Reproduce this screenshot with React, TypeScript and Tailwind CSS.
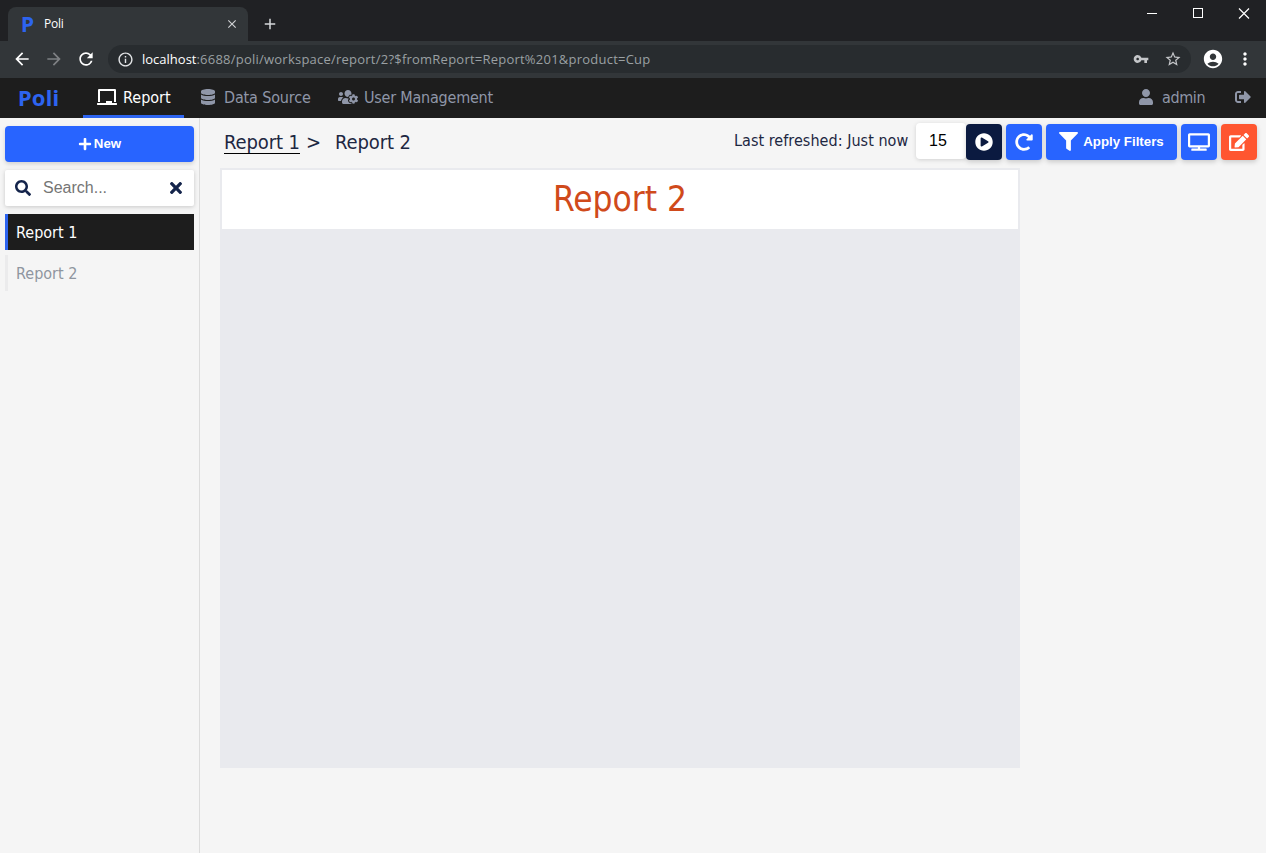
import React from 'react';
import {
  FaChalkboard, FaDatabase, FaUsersCog, FaUser, FaSignOutAlt, FaPlus, FaSearch,
  FaTimes, FaPlayCircle, FaRedoAlt, FaFilter, FaTv, FaEdit,
} from 'react-icons/fa';
import {
  MdArrowBack, MdArrowForward, MdRefresh, MdInfoOutline, MdVpnKey, MdStarBorder,
  MdAccountCircle, MdMoreVert, MdClose, MdAdd,
} from 'react-icons/md';

const BrowserTabs = () => (
  <div className="flex h-[41px] items-stretch bg-[#202124] pl-2">
    <div className="mt-[7px] flex w-60 shrink-0 items-center rounded-t-lg bg-[#323639] pl-[13px] pr-[9px] text-white">
      <span className="w-[23px] font-['Noto_Sans',sans-serif] text-[21px] leading-none font-bold text-[#2d64f0]">P</span>
      <span className="flex-1 font-['Open_Sans',sans-serif] text-[12px] leading-4 tracking-[-0.2px]">Poli</span>
      <MdClose className="size-[14px] text-[#cfd1d4]" />
    </div>
    <MdAdd className="mt-[15px] ml-[13px] size-[18px] text-[#d5d7da]" />
    <div className="mt-2 mr-4 ml-auto flex gap-[34px] text-white">
      <svg className="h-[11px] w-3" viewBox="0 0 12 11"><path d="M1 5.5h10" stroke="currentColor" /></svg>
      <svg className="h-[11px] w-3" viewBox="0 0 12 11"><rect x="1.5" y=".5" width="9" height="9" fill="none" stroke="currentColor" /></svg>
      <svg className="h-[11px] w-3" viewBox="0 0 12 11"><path d="m1 .5 10 10M11 .5l-10 10" stroke="currentColor" strokeWidth="1.2" /></svg>
    </div>
  </div>
);

const AddressBar = () => (
  <div className="flex h-[37px] items-center bg-[#323639] pb-px text-white">
    <MdArrowBack className="ml-3 size-5" />
    <MdArrowForward className="ml-3 size-5 text-[#7e8184]" />
    <MdRefresh className="ml-3 size-5" />
    <div className="ml-3 flex h-7 w-[1083px] items-center rounded-full bg-[#282c2f] pr-[9px] pl-[9px]">
      <MdInfoOutline className="size-[17px] text-[#e4e6e8]" />
      <span className="ml-2 flex-1 font-['Open_Sans',sans-serif] text-[13px] leading-5 tracking-[0.23px] whitespace-nowrap text-[#9aa0a3]">
        <span className="tracking-normal text-white">localhost</span>:6688/poli/workspace/report/2?$fromReport=Report%201&amp;product=Cup
      </span>
      <MdVpnKey className="size-4 text-[#c4c6c9]" />
      <MdStarBorder className="ml-[15px] size-[18px] text-[#c4c6c9]" />
    </div>
    <MdAccountCircle className="ml-[11px] size-[22px]" />
    <MdMoreVert className="ml-[11px] size-5" />
  </div>
);

const NavBar = () => (
  <nav className="flex h-10 bg-[#1d1d1d] font-['DejaVu_Sans_Condensed','DejaVu_Sans',sans-serif] text-[16px] text-[#8f96a8] [font-stretch:condensed]">
    <div className="w-[83px] pt-[3px] pl-[18px] font-['Noto_Sans',sans-serif] text-[22px] leading-8 font-bold tracking-[0.2px] text-[#2d64f0]">Poli</div>
    <div className="flex w-[101px] items-center border-b-[3px] border-[#2d64f0] pl-[14px] text-white">
      <FaChalkboard className="h-4 w-5" />
      <span className="ml-[6px] pt-[2px] whitespace-nowrap">Report</span>
    </div>
    <div className="flex w-[140px] items-center pb-[3px] pl-[17px]">
      <FaDatabase className="h-4 w-[14px]" />
      <span className="ml-[9px] pt-[2px] whitespace-nowrap tracking-[-0.15px]">Data Source</span>
    </div>
    <div className="flex items-center pb-[3px] pl-[14px]">
      <FaUsersCog className="h-4 w-5" />
      <span className="ml-[6px] pt-[2px] whitespace-nowrap tracking-[-0.22px]">User Management</span>
    </div>
    <div className="mr-[15px] ml-auto flex items-center pb-[3px]">
      <FaUser className="h-4 w-[14px]" />
      <span className="ml-[9px] w-[44px] pt-[2px] whitespace-nowrap tracking-[-0.4px]">admin</span>
      <FaSignOutAlt className="ml-[29px] size-4" />
    </div>
  </nav>
);

const Sidebar = () => (
  <aside className="w-[200px] shrink-0 border-r border-[#dcdcdc] pt-2 pr-[5px] pl-[5px]">
    <button className="flex h-9 w-full items-center justify-center rounded-[4px] bg-[#2864ff] pb-px font-['Liberation_Sans',sans-serif] text-[13.3px] font-bold text-white shadow-[0_2px_4px_rgba(0,0,0,0.15)]">
      <FaPlus className="mr-[2px] size-[14px]" />New
    </button>
    <div className="mt-2 flex h-9 items-center rounded-[2px] bg-white pr-[11px] pl-[10px] text-[#14244b] shadow-[0_1px_4px_rgba(0,0,0,0.18)]">
      <FaSearch className="size-4" />
      <span className="ml-3 flex-1 font-['Liberation_Sans',sans-serif] text-[16px] text-[#757575]">Search...</span>
      <FaTimes className="-mt-px size-[14px] scale-[1.25]" />
    </div>
    <div className="mt-2 flex flex-col gap-[5px] font-['DejaVu_Sans_Condensed','DejaVu_Sans',sans-serif] text-[16px] [font-stretch:condensed]">
      <div className="flex h-9 items-center border-l-[3px] border-[#2d64f0] bg-[#1d1d1d] pt-px pl-2 text-white">Report 1</div>
      <div className="flex h-9 items-center border-l-[3px] border-[#ebebec] pt-px pl-2 text-[#8f96a0]">Report 2</div>
    </div>
  </aside>
);

const btn = 'flex h-9 items-center justify-center rounded-[4px] pb-px text-white shadow-[0_2px_5px_rgba(0,0,0,0.18)]';

const ReportHeader = () => (
  <div className="flex h-[50px] font-['DejaVu_Sans_Condensed','DejaVu_Sans',sans-serif] text-[#1d2742] [font-stretch:condensed]">
    <div className="flex pt-3 pl-6 text-[20px] leading-6 tracking-[-0.1px] whitespace-nowrap">
      <span className="h-6 w-[76px] border-b border-black">Report 1</span>
      <span className="ml-[6px] w-[29px]">&gt;</span>
      <span>Report 2</span>
    </div>
    <div className="mr-[9px] ml-auto flex items-start pt-[6px]">
      <span className="mt-[5px] w-[182px] text-[16px] leading-6 tracking-[0.04px] whitespace-nowrap">Last refreshed: Just now</span>
      <div className="-mt-px h-9 w-[50px] rounded-[4px] bg-white pl-[13px] font-['Liberation_Sans',sans-serif] text-[16px] leading-[35px] text-black shadow-[0_1px_4px_rgba(0,0,0,0.15)]">15</div>
      <button className={`${btn} w-9 bg-[#0b1a40]`}><FaPlayCircle className="size-[18px]" /></button>
      <button className={`${btn} ml-1 w-9 bg-[#2864ff]`}><FaRedoAlt className="size-[18px]" /></button>
      <button className={`${btn} ml-1 w-[131px] bg-[#2864ff] font-['Liberation_Sans',sans-serif] text-[13.3px] font-bold`}>
        <FaFilter className="mr-[5px] size-[19px]" />Apply Filters
      </button>
      <button className={`${btn} ml-1 w-9 bg-[#2864ff]`}><FaTv className="h-[18px] w-[22px]" /></button>
      <button className={`${btn} ml-1 w-9 bg-[#ff5630]`}><FaEdit className="h-[18px] w-5" /></button>
    </div>
  </div>
);

export default function App() {
  return (
    <div className="flex h-[853px] w-[1266px] flex-col overflow-hidden bg-[#f5f5f5]">
      <BrowserTabs />
      <AddressBar />
      <NavBar />
      <div className="flex flex-1">
        <Sidebar />
        <main className="flex-1">
          <ReportHeader />
          <div className="ml-5 h-[600px] w-[800px] border-2 border-[#e9eaee] bg-[#e9eaee]">
            <div className="h-[59px] bg-white text-center font-['DejaVu_Sans_Condensed','DejaVu_Sans',sans-serif] text-[35px] leading-[58px] text-[#d04a1b] [font-stretch:condensed]">Report 2</div>
          </div>
        </main>
      </div>
    </div>
  );
}
